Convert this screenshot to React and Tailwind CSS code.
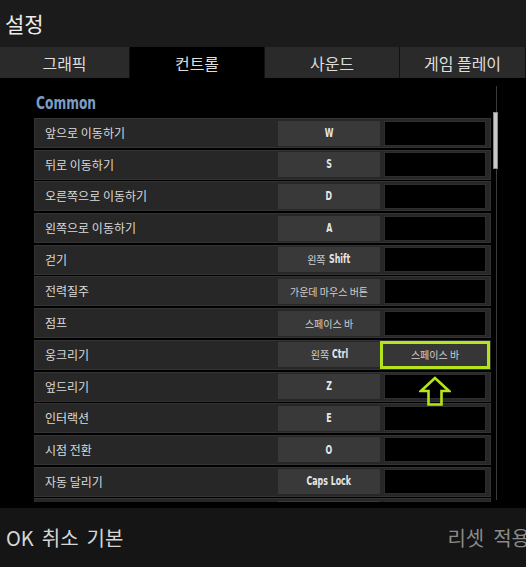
const tabs = [
  { label: "그래픽", w: "w-[130px]" },
  { label: "컨트롤", w: "w-[135px]", active: true },
  { label: "사운드", w: "w-[135px]" },
  { label: "게임 플레이", w: "w-[126px]" },
];

const rows = [
  { label: "앞으로 이동하기", key: "W" },
  { label: "뒤로 이동하기", key: "S" },
  { label: "오른쪽으로 이동하기", key: "D" },
  { label: "왼쪽으로 이동하기", key: "A" },
  { label: "걷기", key: "Shift", prefix: "왼쪽" },
  { label: "전력질주", ko: "가운데 마우스 버튼" },
  { label: "점프", ko: "스페이스 바" },
  { label: "웅크리기", key: "Ctrl", prefix: "왼쪽", alt: "스페이스 바", hl: true },
  { label: "엎드리기", key: "Z" },
  { label: "인터랙션", key: "E" },
  { label: "시점 전환", key: "O" },
  { label: "자동 달리기", key: "Caps Lock" },
  { label: "", key: "" },
];

const cond = { fontFamily: '"DejaVu Sans Condensed", sans-serif' };

function KeyLabel({ row }) {
  if (row.ko) return <span className="text-[10px] text-[#d0d0d0]">{row.ko}</span>;
  return (
    <span className="flex items-center">
      {row.prefix && <span className="text-[10px] text-[#d0d0d0]">{row.prefix}</span>}
      <span
        className={`inline-block text-[12.5px] font-bold text-[#e6e6e6] scale-x-[0.7] ${row.prefix ? "origin-left ml-[3px] -mr-[8px]" : ""}`}
        style={cond}
      >
        {row.key}
      </span>
    </span>
  );
}

function Row({ row }) {
  return (
    <div className="h-[30px] shrink-0 flex items-center gap-[4px] pr-[4px] bg-[#272727] border border-[#333]">
      <div className="flex-1 pl-[10px] text-[12px] text-[#dadada]">{row.label}</div>
      <div className="w-[102px] h-[25px] bg-[#393939] flex items-center justify-center">
        <KeyLabel row={row} />
      </div>
      {row.hl ? (
        <div className="w-[110px] h-[28px] -ml-[4px] -mr-[4px] border-[3px] border-[#b4e41c] bg-[#363636] flex items-center justify-center text-[10px] text-[#d0d0d0]">
          {row.alt}
        </div>
      ) : (
        <div className="w-[102px] h-[25px] bg-black border border-[#2e2e2e]" />
      )}
    </div>
  );
}

export default function App() {
  return (
    <div
      className="w-[526px] h-[567px] flex flex-col bg-black overflow-hidden"
      style={{ fontFamily: '"Noto Sans CJK KR", "Noto Sans", sans-serif' }}
    >
      <div className="h-[47px] shrink-0 bg-[#1b1b1b] flex items-center px-[5px] text-[21px] text-[#ececec]">
        설정
      </div>

      <div className="h-[31px] shrink-0 flex bg-black">
        {tabs.map((t) => (
          <div
            key={t.label}
            className={`${t.w} flex items-center justify-center text-[16px] text-[#dedede] border-r border-[#111] ${
              t.active ? "bg-black" : "bg-[#2a2a2a]"
            }`}
          >
            {t.label}
          </div>
        ))}
      </div>

      <div className="flex-1 relative overflow-hidden">
        <div className="pl-[36px] pt-[12px] h-[40px]">
          <div
            className="inline-block origin-left scale-x-[0.8] text-[17px] font-bold text-[#7c9bc6] leading-[22px]"
            style={cond}
          >
            Common
          </div>
        </div>
        <div className="ml-[34px] w-[457px] h-[384px] overflow-hidden flex flex-col gap-[1.7px]">
          {rows.map((r, i) => (
            <Row key={i} row={r} />
          ))}
        </div>

        <svg className="absolute left-[419px] top-[298px]" width="32" height="30" viewBox="0 0 32 30">
          <path d="M16 2 L2 15 L9.5 15 L9.5 28.5 L22.5 28.5 L22.5 15 L30 15 Z" fill="none" stroke="#b4e41c" strokeWidth="2.6" strokeLinejoin="miter" />
        </svg>

        <div className="absolute left-[496px] top-[8px] w-px h-[414px] bg-[#3a3a3a]" />
        <div className="absolute left-[493px] top-[34px] w-[5px] h-[57px] bg-[#c9c9c9] border border-[#888]" />
      </div>

      <div className="h-[59px] shrink-0 bg-[#151515] flex items-center justify-between pl-[6px] text-[20px]">
        <div className="flex gap-[8px] text-[#d6d6d6]">
          <span>OK</span>
          <span>취소</span>
          <span>기본</span>
        </div>
        <div className="flex gap-[9px] text-[#8a8a8a] -mr-[4px]">
          <span>리셋</span>
          <span>적용</span>
        </div>
      </div>
    </div>
  );
}
